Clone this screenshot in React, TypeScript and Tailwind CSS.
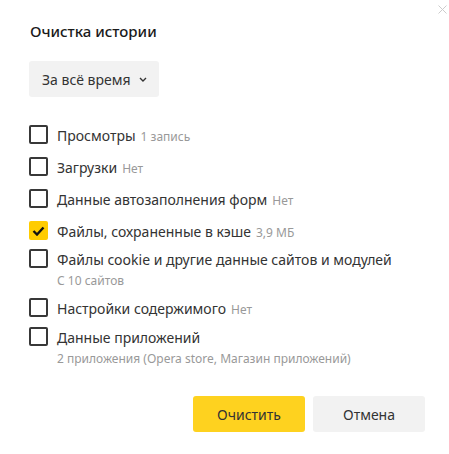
import React from "react";

type Item = { label: string; extra?: string; sub?: string; checked?: boolean; mt: string };

const items: Item[] = [
  { label: "Просмотры", extra: "1 запись", mt: "mt-0" },
  { label: "Загрузки", extra: "Нет", mt: "mt-[13px]" },
  { label: "Данные автозаполнения форм", extra: "Нет", mt: "mt-[13px]" },
  { label: "Файлы, сохраненные в кэше", extra: "3,9 МБ", checked: true, mt: "mt-[13px]" },
  { label: "Файлы cookie и другие данные сайтов и модулей", sub: "С 10 сайтов", mt: "mt-[9px]" },
  { label: "Настройки содержимого", extra: "Нет", mt: "mt-[8px]" },
  { label: "Данные приложений", sub: "2 приложения (Opera store, Магазин приложений)", mt: "mt-[10px]" },
];

function Checkbox({ checked }: { checked?: boolean }) {
  if (checked) {
    return (
      <div className="w-[19px] h-[19px] shrink-0 rounded-[2px] bg-[#ffcc00] flex items-center justify-center">
        <svg width="13" height="10" viewBox="0 0 13 10" fill="none">
          <path d="M1.5 5 L5 8.5 L11.5 1.5" stroke="#111" strokeWidth="2.4" />
        </svg>
      </div>
    );
  }
  return <div className="w-[19px] h-[19px] shrink-0 rounded-[2px] border-2 border-[#383838] bg-white" />;
}

export default function App() {
  return (
    <div className="relative w-[449px] h-[454px] bg-white text-[#333] [font-family:'Noto_Sans',sans-serif]">
      <div className="absolute top-[5px] right-[2px] w-[9px] h-[9px]">
        <svg width="9" height="9" viewBox="0 0 9 9">
          <path d="M0.5 0.5 L8.5 8.5 M8.5 0.5 L0.5 8.5" stroke="#cccccc" strokeWidth="1" />
        </svg>
      </div>
      <div className="pl-[29px] pt-[21px]">
        <h1 className="text-[15px] leading-[20px] font-medium text-[#1a1a1a] pl-[1px]">Очистка истории</h1>
        <button className="mt-[20px] w-[130px] h-[36px] rounded-[3px] bg-[#f2f2f2] flex items-center pl-[13px] text-[14px] text-[#333]">
          <span>За всё время</span>
          <svg className="ml-[9px]" width="8" height="5" viewBox="0 0 8 5" fill="none">
            <path d="M1 1 L4 4 L7 1" stroke="#333" strokeWidth="1.4" />
          </svg>
        </button>
        <div className="mt-[28px] flex flex-col">
          {items.map((it, i) => (
            <div key={i} className={`flex items-start ${it.mt}`}>
              <Checkbox checked={it.checked} />
              <div className="ml-[9px] flex flex-col">
                <div className="h-[19px] flex items-baseline whitespace-nowrap pt-[1px]">
                  <span className="text-[14px] leading-[19px] text-[#333]">{it.label}</span>
                  {it.extra && <span className="ml-[5px] text-[12px] leading-[19px] text-[#999]">{it.extra}</span>}
                </div>
                {it.sub && <div className="mt-[4px] h-[18px] text-[12px] leading-[18px] text-[#999] whitespace-nowrap">{it.sub}</div>}
              </div>
            </div>
          ))}
        </div>
        <div className="mt-[28px] flex justify-end pr-[24px] gap-[8px]">
          <button className="w-[112px] h-[36px] rounded-[3px] bg-[#fed21f] text-[14px] text-[#333]">Очистить</button>
          <button className="w-[112px] h-[36px] rounded-[3px] bg-[#f2f2f2] text-[14px] text-[#333]">Отмена</button>
        </div>
      </div>
    </div>
  );
}
